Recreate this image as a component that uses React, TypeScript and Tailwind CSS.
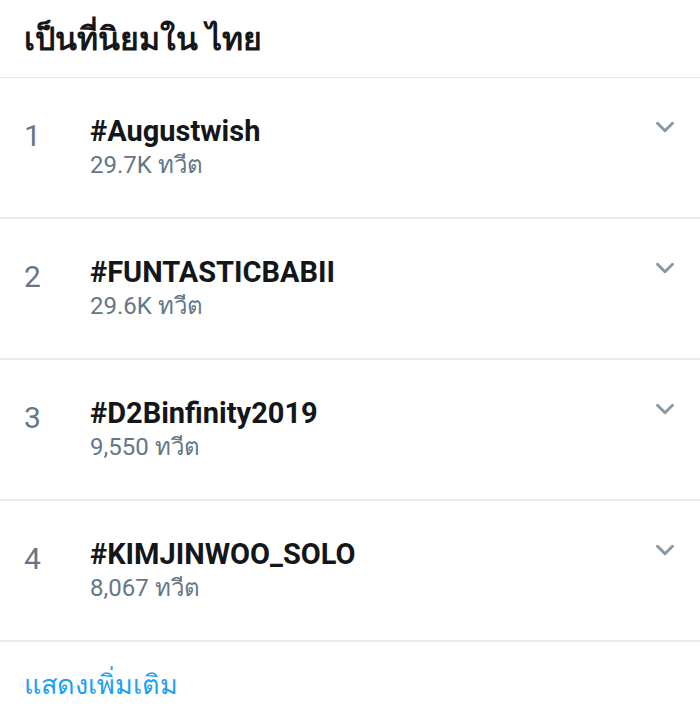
import { ChevronDown } from "lucide-react";

const trends = [
  { rank: 1, tag: "#Augustwish", count: "29.7K ทวีต" },
  { rank: 2, tag: "#FUNTASTICBABII", count: "29.6K ทวีต" },
  { rank: 3, tag: "#D2Binfinity2019", count: "9,550 ทวีต" },
  { rank: 4, tag: "#KIMJINWOO_SOLO", count: "8,067 ทวีต" },
];

export default function App() {
  return (
    <div
      className="w-[700px] h-[713px] bg-white overflow-hidden"
      style={{ fontFamily: 'Roboto, "Noto Sans", "DejaVu Sans", sans-serif' }}
    >
      <div className="h-[78px] px-6 flex items-center border-b border-[#e1e8ed]">
        <h2 className="text-[32px] font-bold text-[#14171a] leading-none">เป็นที่นิยมใน ไทย</h2>
      </div>

      {trends.map(t => (
        <div key={t.rank} className="h-[141px] border-b-2 border-[#e6ecf0] flex pl-6 pr-[20px] pt-[35px]">
          <div className="w-[66px] text-[30px] leading-[36px] text-[#657786] pt-[5px]">{t.rank}</div>
          <div className="flex-1">
            <div className="text-[29px] font-bold text-[#14171a] leading-[36px]">{t.tag}</div>
            <div className="text-[24px] text-[#657786] leading-[32px]">{t.count}</div>
          </div>
          <ChevronDown size={30} strokeWidth={2.4} className="text-[#8899a6] mt-[-1px]" />
        </div>
      ))}

      <div className="px-6 pt-[26px]">
        <span className="text-[27px] text-[#1da1f2] leading-[34px]">แสดงเพิ่มเติม</span>
      </div>
    </div>
  );
}
